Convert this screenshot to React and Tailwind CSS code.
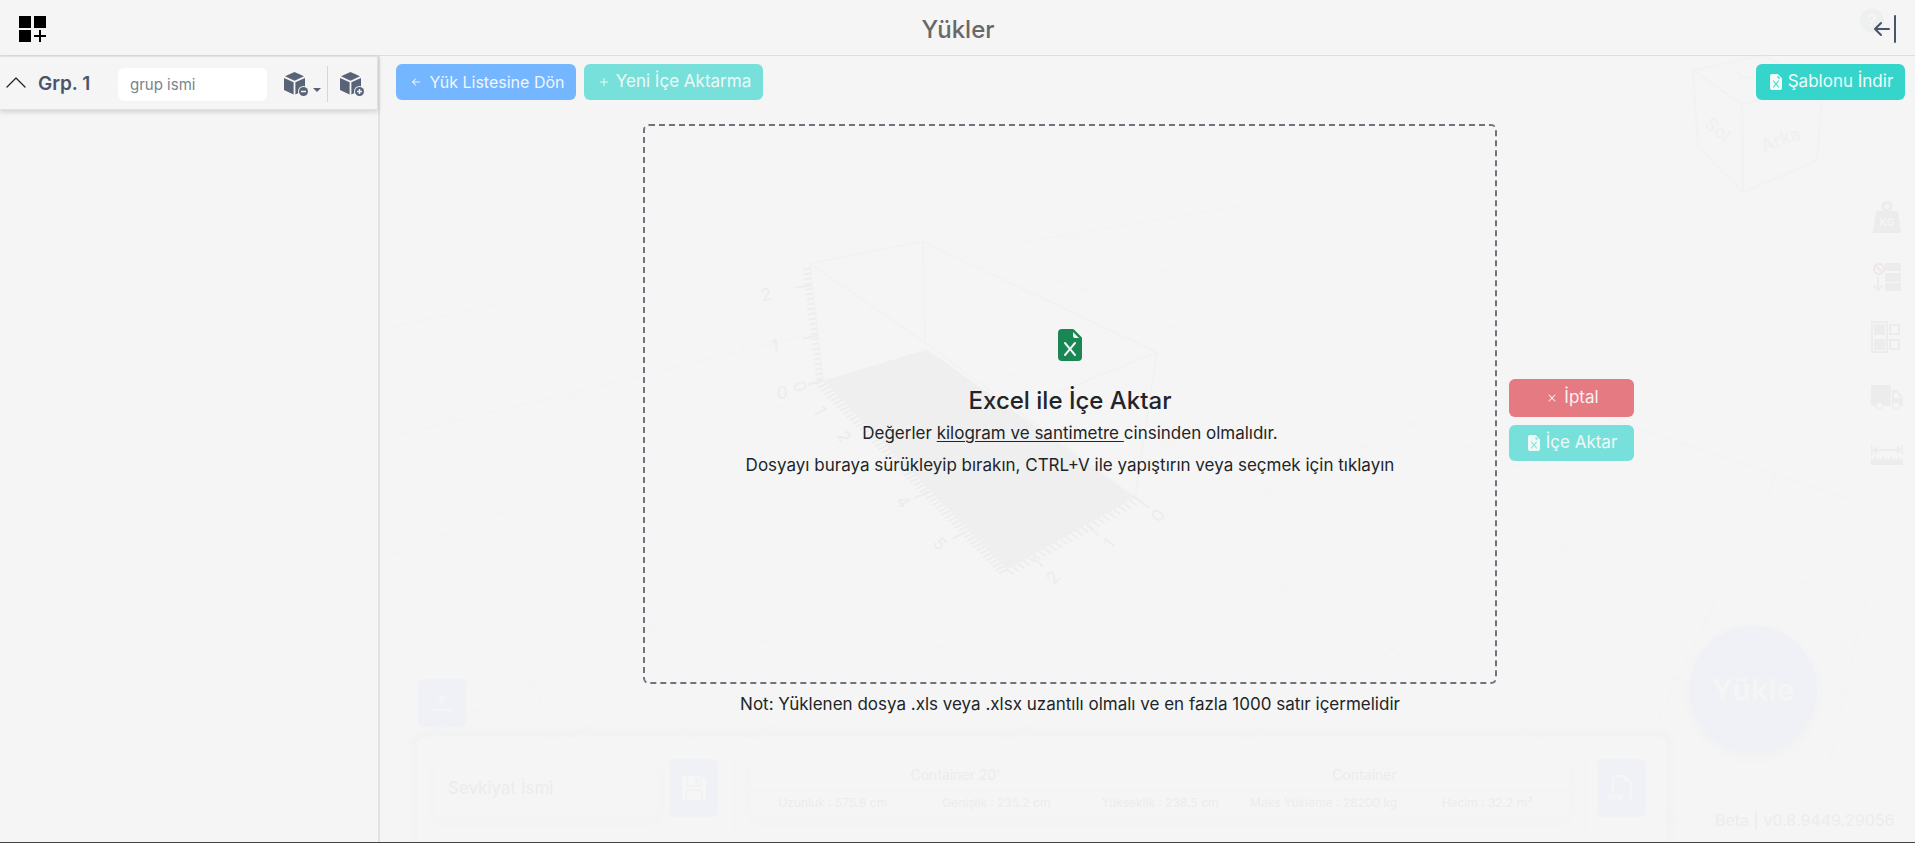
import React, { useState } from 'react';
import {
  BsArrowLeftShort,
  BsFileEarmarkExcelFill,
  BsFiletypePdf,
  BsFloppyFill,
  BsPlus,
  BsX,
} from 'react-icons/bs';

const containerFields = [
  'Uzunluk : 575.8 cm',
  'Genişlik : 235.2 cm',
  'Yükseklik : 238.5 cm',
  'Maks Yükleme : 28200 kg',
  'Hacim : 32.2 m³',
];

// [x, y, rotation, label] on the ruler edges of the container
const rulerLabels = [
  [766, 295, -10, '2'],
  [775, 346, -5, '1'],
  [782, 393, 0, '0'],
  [800, 387, 70, '0'],
  [820, 411, 65, '1'],
  [844, 437, 60, '2'],
  [903, 502, 55, '4'],
  [940, 544, 50, '5'],
  [1158, 516, -55, '0'],
  [1109, 544, -50, '1'],
  [1053, 578, -45, '2'],
];

const floorLines = [
  [380, 560, 960, 338], [380, 640, 1020, 372], [400, 748, 1120, 400], [560, 742, 1260, 398],
  [740, 742, 1420, 420], [1000, 742, 1560, 440], [1240, 742, 1640, 500],
  [380, 330, 800, 240], [380, 440, 830, 330], [980, 250, 1250, 205], [1080, 290, 1330, 235],
  [1000, 215, 1850, 500], [920, 225, 1915, 628], [1160, 340, 1915, 730], [1160, 440, 1915, 790],
  [1140, 500, 1715, 843], [740, 340, 840, 600], [560, 360, 690, 738], [440, 390, 552, 738],
  [1716, 600, 1655, 726], [1865, 600, 1812, 843], [1684, 442, 1645, 500], [1776, 474, 1766, 500],
];

// evenly spaced ruler ticks between two points
function Ticks({ from, to, count, dx, dy }) {
  return Array.from({ length: count + 1 }, (_, i) => {
    const x = from[0] + ((to[0] - from[0]) * i) / count;
    const y = from[1] + ((to[1] - from[1]) * i) / count;
    return <line key={i} x1={x} y1={y} x2={x + dx} y2={y + dy} stroke="#ededed" strokeWidth="2" />;
  });
}

function Scene() {
  return (
    <svg className="absolute inset-0 w-full h-full" viewBox="0 0 1915 843" preserveAspectRatio="xMidYMid slice" aria-hidden="true">
      {floorLines.map(([x1, y1, x2, y2]) => (
        <line key={`${x1}-${y1}`} x1={x1} y1={y1} x2={x2} y2={y2} stroke="#f3f3f3" strokeWidth="1" />
      ))}
      <polygon points="927,350 823,381 1007,570 1135,498" fill="#efefef" />
      <g fill="none" stroke="#f0f0f0" strokeWidth="1">
        <polyline points="823,381 810,264 923,242 925,345" />
        <polyline points="923,242 1157,353 1135,498" />
        <polyline points="810,264 925,343 1135,498" />
        <line x1="1157" y1="353" x2="1023" y2="407" />
      </g>
      <Ticks from={[810, 269]} to={[823, 379]} count={22} dx={-7} dy={1} />
      <Ticks from={[823, 381]} to={[1007, 570]} count={58} dx={-8} dy={4} />
      <Ticks from={[1007, 570]} to={[1135, 498]} count={24} dx={7} dy={5} />
      <g stroke="#ededed" strokeWidth="2">
        <line x1="811" y1="286" x2="796" y2="288" />
        <line x1="818" y1="336" x2="803" y2="339" />
        <line x1="823" y1="381" x2="808" y2="385" />
        <line x1="928" y1="492" x2="914" y2="499" />
        <line x1="966" y1="532" x2="953" y2="539" />
        <line x1="1133" y1="497" x2="1149" y2="508" />
        <line x1="1087" y1="526" x2="1099" y2="536" />
        <line x1="1032" y1="557" x2="1043" y2="567" />
      </g>
      <g fill="#ececec" fontSize="17" fontFamily="Inter, sans-serif" textAnchor="middle">
        {rulerLabels.map(([x, y, angle, label]) => (
          <text key={`${x}-${y}`} transform={`translate(${x} ${y}) rotate(${angle})`} y="6">{label}</text>
        ))}
      </g>

      {/* view cube */}
      <g fill="none" stroke="#f2f2f2" strokeWidth="2" strokeLinejoin="round">
        <polygon points="1693,71 1742,105 1743,193 1698,147" />
        <polygon points="1742,105 1823,85 1817,161 1743,193" />
        <polyline points="1693,71 1762,56 1823,85" />
        <path d="M1738 73c4 7 12 7 16 2" />
      </g>
      <g fill="#f0f0f0" fontSize="18" fontWeight="500" fontFamily="Inter, sans-serif" textAnchor="middle">
        <text transform="translate(1714 135) rotate(38)">Sol</text>
        <text transform="translate(1783 146) rotate(-20)">Arka</text>
      </g>
      <circle cx="1872" cy="21" r="12" fill="#eeefef" />
      <text x="1872" y="27" fill="#f5f5f5" fontSize="17" fontWeight="700" fontFamily="Inter, sans-serif" textAnchor="middle">?</text>
    </svg>
  );
}

function WeightIcon() {
  return (
    <svg width="32" height="32" viewBox="0 0 32 32" fill="#ececec">
      <path d="M6 10h20a1 1 0 0 1 1 1l3 19a1 1 0 0 1-1 2H3a1 1 0 0 1-1-2l3-19a1 1 0 0 1 1-1z" />
      <circle cx="16" cy="5.5" r="4" fill="none" stroke="#ececec" strokeWidth="3" />
      <text x="16" y="25" fill="#f5f5f5" fontSize="10" fontWeight="700" fontFamily="Inter, sans-serif" textAnchor="middle">KG</text>
    </svg>
  );
}

function NoStackIcon() {
  return (
    <svg width="32" height="32" viewBox="0 0 32 32" fill="#ececec">
      <path d="M14 2h16v8H14zM14 12h16v9H14zM14 22h16v8H14z" />
      <g fill="none" strokeWidth="2">
        <circle cx="8" cy="8" r="5" stroke="#f0e6e8" />
        <path d="M4.500 4.500l7 7" stroke="#f0e6e8" />
        <path d="M7 16v13M2.500 24.500L7 29l4.500-4.500" stroke="#ececec" />
      </g>
    </svg>
  );
}

function LayoutIcon() {
  return (
    <svg width="32" height="32" viewBox="0 0 32 32" fill="#ececec">
      <path d="M3 3h11v11H3zM3 18h11v11H3z" />
      <g fill="none" stroke="#ececec" strokeWidth="2">
        <path d="M1 1h15v30H1zM19 4h9v9h-9zM19 19h9v9h-9z" />
      </g>
    </svg>
  );
}

function TruckIcon() {
  return (
    <svg width="32" height="32" viewBox="0 0 32 32" fill="#ececec">
      <rect y="4" width="20" height="21" rx="2" />
      <path fillRule="evenodd" d="M21 9h5l6 7v9H21zM23 12v5h7l-4-5z" />
      <circle cx="8.500" cy="24.500" r="3.500" fill="#f5f5f5" stroke="#ececec" />
      <circle cx="25" cy="24.500" r="3.500" fill="#f5f5f5" stroke="#ececec" />
    </svg>
  );
}

function RulerIcon() {
  return (
    <svg width="32" height="32" viewBox="0 0 32 32" fill="#ececec">
      <path d="M0 17l2 2 2-4 2 4 2-2 2 2 2-4 2 4 2-2 2 2 2-4 2 4 2-2 2 2 2-4 2 4 2-2v7H0z" />
      <path d="M.5 4v10M31.500 4v10M3 9h26M6 6L3 9l3 3M26 6l3 3-3 3" fill="none" stroke="#ececec" strokeWidth="2" />
    </svg>
  );
}

const tools = [
  { name: 'Ağırlık', Icon: WeightIcon },
  { name: 'İstifleme', Icon: NoStackIcon },
  { name: 'Yerleşim', Icon: LayoutIcon },
  { name: 'Araç', Icon: TruckIcon },
  { name: 'Ölçüler', Icon: RulerIcon },
];

// The planner page that stays mounted behind the loads dialog
function Planner() {
  return (
    <div className="absolute inset-0 overflow-hidden">
      <Scene />

      <div className="absolute right-0 top-[193px] flex flex-col gap-3">
        {tools.map(({ name, Icon }) => (
          <button key={name} aria-label={name} className="w-[58px] h-12 flex items-center justify-center rounded-l-lg border border-r-0 border-[#f3f3f3]">
            <Icon />
          </button>
        ))}
      </div>

      <div className="absolute inset-x-0 bottom-0 flex items-end pl-[418px]">
        <div className="flex-1">
          <button aria-label="Yukarı" className="w-12 h-12 mb-2.5 flex items-center justify-center rounded-md bg-[#eff1f6]">
            <svg width="20" height="20" viewBox="0 0 20 20" fill="none" stroke="#f5f5f5" strokeWidth="2">
              <path d="M0 17h20M10 13V3M6 7l4-4 4 4" />
            </svg>
          </button>
          <div className="h-[105px] flex items-start gap-4 pl-4 pr-5 pt-[22px] rounded-t-md bg-[#f5f5f5] shadow-[0_0_10px_8px_rgba(0,0,0,0.01)]">
            <input
              aria-label="Sevkiyat İsmi"
              placeholder="Sevkiyat İsmi"
              className="w-[224px] h-[58px] px-3.5 rounded-lg text-[17px] placeholder:text-[#ececec] shadow-[0_4px_8px_6px_rgba(0,0,0,0.007)]"
            />
            <button aria-label="Kaydet" className="-ml-1 w-12 h-[58px] flex items-center justify-center rounded-md bg-[#eff1f6] text-[#f6f6f5]">
              <BsFloppyFill size={24} />
            </button>
            <div className="w-px h-[76px] bg-[#f2f2f2]" />
            <div className="flex-1 h-[58px] rounded-lg text-[#ececec] shadow-[0_4px_8px_6px_rgba(0,0,0,0.007)]">
              <div className="h-8 grid grid-cols-2 items-center text-center text-sm border-b border-[#f2f2f2]">
                <span>Container 20'</span>
                <span>Container</span>
              </div>
              <div className="h-6 grid grid-cols-5 items-center text-center text-xs">
                {containerFields.map((field) => (
                  <span key={field}>{field}</span>
                ))}
              </div>
            </div>
            <div className="w-px h-[76px] bg-[#f2f2f2]" />
            <button aria-label="PDF" className="-ml-1 w-12 h-[58px] flex items-center justify-center rounded-md bg-[#eff1f6] text-[#f6f6f5]">
              <BsFiletypePdf size={26} />
            </button>
          </div>
        </div>
        <div className="w-[249px] pl-[23px] pb-3">
          <button className="w-32 h-32 mb-14 rounded-full bg-[#eff1f6] text-[#f5f5f5] text-3xl font-bold shadow-[0_4px_12px_4px_rgba(0,0,0,0.01)]">
            Yükle
          </button>
          <p className="pl-[26px] text-base leading-5 whitespace-nowrap text-[#ececec]">Beta | v0.8.9449.29056</p>
        </div>
      </div>
    </div>
  );
}

function BoxIcon({ type }) {
  return (
    <svg width="25" height="25" viewBox="0 0 25 25" fill="#586378">
      <path d="M10.500 0L20 4.300 10.500 8.800 1 4.300zM0 6l9.600 4.300V22.500L0 18zM21 6l-9.600 4.300V22.500L21 18z" />
      <circle cx="19.500" cy="19.500" r="5.500" fill="#f4f4f4" />
      <circle cx="19.500" cy="19.500" r="4.500" />
      <path d={type === 'add' ? 'M17 19.500h5M19.500 17v5' : 'M17 19.500h5'} stroke="#f4f4f4" strokeWidth="1.500" />
    </svg>
  );
}

function GroupSidebar() {
  const [name, setName] = useState('');

  return (
    <aside className="w-[380px] shrink-0 border-r-2 border-[#dee2e6]">
      <div className="h-[54px] flex items-center pt-0.5 border-b border-t border-r border-[#dee2e6] shadow-[0_2px_5px_rgba(0,0,0,0.15)]">
        <button aria-label="Grubu daralt" className="ml-1.5">
          <svg width="20" height="20" viewBox="0 0 20 20" fill="none" stroke="#212529" strokeLinecap="round" strokeLinejoin="round" strokeWidth="1.300">
            <path d="M1 13l9-9 9 9" />
          </svg>
        </button>
        <label htmlFor="group-name" className="ml-3 w-20 text-[19px] font-semibold text-[#4a556b] whitespace-nowrap">Grp. 1</label>
        <input
          id="group-name"
          value={name}
          onChange={(e) => setName(e.target.value)}
          placeholder="grup ismi"
          className="w-[149px] h-[33px] px-3 rounded-md bg-white text-[15px] outline-none placeholder:text-[#7b838a]"
        />
        <button aria-label="Yük çıkar" className="ml-[17px] flex items-center gap-1">
          <BoxIcon type="remove" />
          <svg width="8" height="5" viewBox="0 0 8 5" className="mt-3" fill="#586378">
            <path d="M0 0h8L4 4z" />
          </svg>
        </button>
        <div className="ml-1.5 w-px h-9 bg-[#d3d6da]" />
        <button aria-label="Yük ekle" className="ml-3">
          <BoxIcon type="add" />
        </button>
      </div>
    </aside>
  );
}

function Header() {
  return (
    <header className="h-14 shrink-0 grid grid-cols-3 items-center pt-0.5 pl-[19px] pr-[18px] border-b border-[#dcdfe2]">
      <button aria-label="Menü" className="justify-self-start">
        <svg width="27" height="26" viewBox="0 0 27 26">
          <path d="M0 0h12v12H0zM15 0h12v12H15zM0 14h12v12H0zM20 14h2v5h5v2h-5v5h-2v-5h-5v-2h5z" />
        </svg>
      </button>
      <h1 className="pt-0.5 text-center text-2xl font-medium text-[#66686a]">Yükler</h1>
      <button aria-label="Kapat" className="justify-self-end">
        <svg width="24" height="28" viewBox="0 0 24 28" fill="none" stroke="#4a556b" strokeWidth="2" strokeLinecap="round" strokeLinejoin="round">
          <path d="M16 14H2M8 8l-6 6 6 6M22 1v26" />
        </svg>
      </button>
    </header>
  );
}

export default function App() {
  return (
    <div className="relative min-h-screen flex flex-col bg-[#f5f5f5] border-b border-[#444444] text-[#212529] font-['Inter','Noto_Sans',sans-serif]">
      <Planner />

      <div className="relative flex-1 flex flex-col">
        <Header />
        <div className="flex-1 flex">
          <GroupSidebar />

          <main className="flex-1 pt-2">
            {/* Action bar */}
            <div className="flex gap-2 pl-4 pr-2.5">
              <button className="w-[180px] h-9 flex items-center justify-center gap-1.5 rounded-md bg-[#74b6ff] text-[#f1f6fc] text-base">
                <BsArrowLeftShort size={16} /> Yük Listesine Dön
              </button>
              <button className="w-[179px] h-9 flex items-center justify-center gap-1 rounded-md bg-[#78e0da] text-[#eef8f7] text-[17px]">
                <BsPlus size={16} /> Yeni İçe Aktarma
              </button>
              <button className="ml-auto w-[149px] h-9 flex items-center justify-center gap-1 rounded-md bg-[#36d5cc] text-[#f1fbfa] text-[17px]">
                <BsFileEarmarkExcelFill size={16} /> Şablonu İndir
              </button>
            </div>

            {/* Import area */}
            <div className="mt-6 flex items-center justify-center gap-3 pr-[18px]">
              <div className="w-[854px] text-center text-[17px]">
                <button className="w-full h-[560px] flex flex-col items-center justify-center pb-1.5 border-2 border-dashed border-[#6c757d] rounded-md cursor-pointer">
                  <BsFileEarmarkExcelFill size={32} className="text-[#198754]" />
                  <span className="mt-6 h-8 text-2xl font-medium leading-8">Excel ile İçe Aktar</span>
                  <span className="mt-2 leading-4">
                    Değerler <u className="underline-offset-2">kilogram ve santimetre </u>cinsinden olmalıdır.
                  </span>
                  <span className="mt-4 leading-4">
                    Dosyayı buraya sürükleyip bırakın, CTRL+V ile yapıştırın veya seçmek için tıklayın
                  </span>
                </button>
                <p className="mt-2 leading-6">
                  Not: Yüklenen dosya .xls veya .xlsx uzantılı olmalı ve en fazla 1000 satır içermelidir
                </p>
              </div>
              <div className="w-[125px] flex flex-col gap-2 text-[17px]">
                <button className="h-[38px] flex items-center justify-center gap-1 rounded-md bg-[#e57a83] text-[#fbf0f1]">
                  <BsX size={16} /> İptal
                </button>
                <button className="h-9 flex items-center justify-center gap-1 rounded-md bg-[#78e0da] text-[#eef8f7]">
                  <BsFileEarmarkExcelFill size={16} /> İçe Aktar
                </button>
              </div>
            </div>
          </main>
        </div>
      </div>
    </div>
  );
}
